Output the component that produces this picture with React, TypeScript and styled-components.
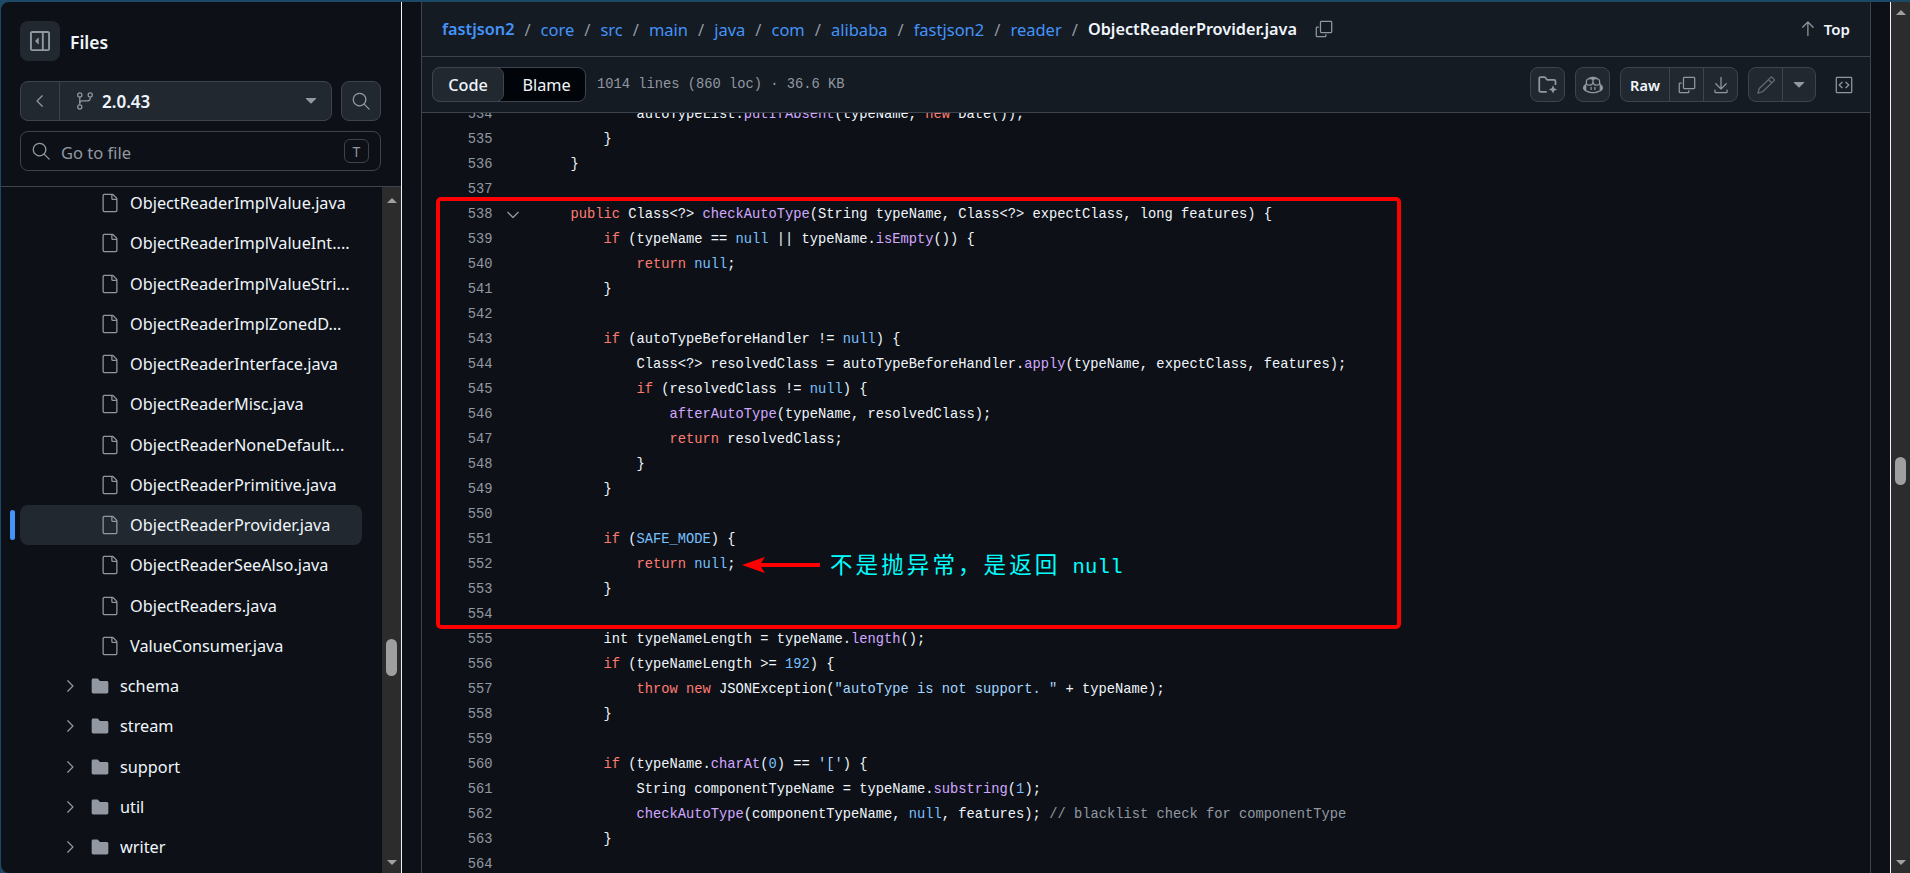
import React from 'react';
import styled, { createGlobalStyle } from 'styled-components';
import {
    GoArrowUp,
    GoChevronDown,
    GoChevronLeft,
    GoChevronRight,
    GoCodeSquare,
    GoCopilot,
    GoCopy,
    GoDownload,
    GoFile,
    GoFileDirectoryFill,
    GoGitBranch,
    GoPencil,
    GoSearch,
    GoTriangleDown,
} from 'react-icons/go';

const UI_FONT = `"Noto Sans", "Open Sans", sans-serif`;
const MONO_FONT = `"Liberation Mono", monospace`;

const GlobalStyle = createGlobalStyle`
  html, body {
    margin: 0;
    height: 100%;
    overflow: hidden;
    background: #1c4966;
  }
  * {
    box-sizing: border-box;
  }
`;

const Page = styled.div`
  display: flex;
  height: 873px;
  padding: 2px 0 0 1px;
  font-family: ${UI_FONT};
  color: #f0f6fc;
`;

const Sidebar = styled.aside`
  display: flex;
  flex-direction: column;
  flex: 0 0 401px;
  background: #0d1117;
  border-right: 1px solid #f4f4f4;
  border-radius: 8px 0 0 8px;
  overflow: hidden;
`;

const SidebarTop = styled.div`
  flex: 0 0 185px;
  padding: 19px 20px 0 19px;
  border-bottom: 1px solid #3d444d;
`;

const TitleRow = styled.div`
  display: flex;
  align-items: center;
  gap: 10px;
  margin-bottom: 20px;
`;

const Title = styled.span`
  padding-top: 2px;
  font-size: 17.5px;
  font-weight: 600;
`;

const IconButton = styled.div<{ $size?: number; $plain?: boolean }>`
  display: flex;
  align-items: center;
  justify-content: center;
  flex: 0 0 ${p => p.$size ?? 40}px;
  height: ${p => p.$size ?? 40}px;
  color: #9198a1;
  background: ${p => (p.$plain ? 'transparent' : '#212830')};
  border: ${p => (p.$plain ? '0' : '1px solid #3d444d')};
  border-radius: 8px;
`;

const BareToggle = styled(IconButton)`
  border: 0;
`;

const BranchRow = styled.div`
  display: flex;
  gap: 9px;
  margin-bottom: 10px;
`;

const BranchGroup = styled.div`
  display: flex;
  align-items: center;
  flex: 1;
  height: 40px;
  background: #212830;
  border: 1px solid #3d444d;
  border-radius: 8px;
  color: #9198a1;
`;

const BackSegment = styled.div`
  display: flex;
  align-items: center;
  justify-content: center;
  flex: 0 0 39px;
  height: 100%;
  border-right: 1px solid #3d444d;
`;

const BranchName = styled.span`
  margin-left: 7px;
  font-size: 17px;
  font-weight: 600;
  color: #f0f6fc;
`;

const BranchIcon = styled.span`
  display: flex;
  margin-left: 15px;
`;

const Caret = styled.span`
  display: flex;
  margin-left: auto;
  margin-right: 10px;
`;

const FileSearch = styled.div`
  display: flex;
  align-items: center;
  height: 40px;
  padding: 0 11px 0 10px;
  border: 1px solid #3d444d;
  border-radius: 8px;
  color: #9198a1;
  font-size: 16.5px;
`;

const Placeholder = styled.span`
  margin-left: 10px;
  padding-top: 2px;
`;

const KeyHint = styled.span`
  display: flex;
  align-items: center;
  justify-content: center;
  width: 25px;
  height: 24px;
  margin-left: auto;
  border: 1px solid #3d444d;
  border-radius: 6px;
  font-size: 14px;
`;

const TreePane = styled.div`
  display: flex;
  flex: 1;
  min-height: 0;
`;

const Tree = styled.ul`
  flex: 1;
  margin: -4px 0 0;
  padding: 0;
  list-style: none;
  overflow: hidden;
`;

const TreeRow = styled.li<{ $folder?: boolean; $active?: boolean }>`
  position: relative;
  display: flex;
  align-items: center;
  gap: 10px;
  height: 40.25px;
  margin: 0 20px 0 19px;
  padding-left: ${p => (p.$folder ? 40 : 80)}px;
  font-size: 16.25px;
  color: #f0f6fc;
  background: ${p => (p.$active ? '#212830' : 'transparent')};
  border-radius: 8px;
  svg {
    flex: none;
    color: #9198a1;
  }
`;

const ActiveMark = styled.span`
  position: absolute;
  left: -10px;
  top: 5px;
  width: 5px;
  height: 30px;
  border-radius: 3px;
  background: #4493f8;
`;

const ScrollTrack = styled.div`
  display: flex;
  flex-direction: column;
  align-items: center;
  flex: 0 0 19px;
  background: #2c2c2c;
`;

const ScrollUp = styled.span<{ $top: number }>`
  width: 0;
  height: 0;
  margin-top: ${p => p.$top}px;
  border-left: 5px solid transparent;
  border-right: 5px solid transparent;
  border-bottom: 5px solid #a0a0a0;
`;

const ScrollDown = styled.span`
  width: 0;
  height: 0;
  margin-top: auto;
  margin-bottom: 8px;
  border-left: 5px solid transparent;
  border-right: 5px solid transparent;
  border-top: 5px solid #a0a0a0;
`;

const ScrollThumb = styled.span<{ $gap: number; $height: number }>`
  width: 11px;
  height: ${p => p.$height}px;
  margin-top: ${p => p.$gap}px;
  border-radius: 6px;
  background: #9f9f9f;
`;

const Main = styled.main`
  display: flex;
  flex: 1;
  min-width: 0;
  background: #0d1117;
  border-right: 1px solid #f4f4f4;
  padding: 0 19px;
`;

const Blob = styled.section`
  display: flex;
  flex-direction: column;
  flex: 1;
  min-width: 0;
  border-left: 1px solid #3d444d;
  border-right: 1px solid #3d444d;
`;

const PathBar = styled.header`
  display: flex;
  align-items: center;
  flex: 0 0 55px;
  padding: 0 20px;
  background: #151b23;
  border-bottom: 1px solid #3d444d;
  font-size: 16.5px;
`;

const Crumb = styled.a<{ $root?: boolean }>`
  color: #4493f8;
  font-size: ${p => (p.$root ? '16.25px' : 'inherit')};
  font-weight: ${p => (p.$root ? 600 : 400)};
`;

const Slash = styled.span`
  margin: 0 10px;
  color: #9198a1;
`;

const CurrentFile = styled.strong`
  font-size: 16.25px;
  font-weight: 600;
`;

const CopyPath = styled.span`
  display: flex;
  margin-left: 17px;
  color: #9198a1;
`;

const TopLink = styled.span`
  display: flex;
  align-items: center;
  gap: 6px;
  margin-left: auto;
  font-size: 15px;
  font-weight: 600;
  svg {
    color: #9198a1;
  }
`;

const Toolbar = styled.div`
  display: flex;
  align-items: center;
  flex: 0 0 56px;
  padding: 0 16px 0 10px;
  background: #151b23;
  border-bottom: 1px solid #3d444d;
`;

const Segmented = styled.div`
  display: flex;
  height: 35px;
  background: #010409;
  border: 1px solid #3d444d;
  border-radius: 8px;
`;

const Segment = styled.span<{ $active?: boolean }>`
  display: flex;
  align-items: center;
  justify-content: center;
  width: ${p => (p.$active ? 72 : 81)}px;
  margin: ${p => (p.$active ? '-1px 0 -1px -1px' : '0')};
  padding-left: ${p => (p.$active ? 0 : 4)}px;
  font-size: 16.25px;
  font-weight: ${p => (p.$active ? 500 : 400)};
  background: ${p => (p.$active ? '#212830' : 'transparent')};
  border: ${p => (p.$active ? '1px solid #3d444d' : '0')};
  border-radius: 8px;
`;

const FileInfo = styled.span`
  margin-left: 11px;
  font-family: ${MONO_FONT};
  font-size: 13.75px;
  color: #9198a1;
`;

const ToolActions = styled.div`
  display: flex;
  align-items: center;
  gap: 10px;
  margin-left: auto;
`;

const ToolGroup = styled.div<{ $muted?: boolean }>`
  display: flex;
  height: 35px;
  margin-right: ${p => (p.$muted ? 8 : 0)}px;
  background: #212830;
  border: 1px solid #3d444d;
  border-radius: 8px;
  color: #9198a1;
`;

const ToolCell = styled.span<{ $width: number; $dim?: boolean }>`
  display: flex;
  align-items: center;
  justify-content: center;
  width: ${p => p.$width}px;
  font-size: 14.5px;
  font-weight: 600;
  color: ${p => (p.$dim ? '#656c76' : 'inherit')};
  & + & {
    border-left: 1px solid #3d444d;
  }
`;

const RawLabel = styled(ToolCell)`
  color: #f0f6fc;
`;

const CodePane = styled.div`
  position: relative;
  flex: 1;
  min-height: 0;
  overflow: hidden;
`;

const CodeList = styled.div`
  margin-top: -11px;
  font-family: ${MONO_FONT};
  font-size: 13.75px;
  color: #f0f6fc;
`;

const CodeRow = styled.div`
  display: flex;
  align-items: center;
  height: 25px;
  white-space: pre;
`;

const LineNumber = styled.span`
  flex: 0 0 70.5px;
  text-align: right;
  color: #9198a1;
`;

const Gutter = styled.span`
  display: flex;
  flex: 0 0 45px;
  padding-left: 10px;
  color: #9198a1;
`;

type TokenKind = 't' | 'k' | 'f' | 'c' | 's' | 'm';
type CodeToken = [TokenKind, string];

const tokenColors: Record<TokenKind, string> = {
    t: '#f0f6fc',
    k: '#ff7b72',
    f: '#d2a8ff',
    c: '#79c0ff',
    s: '#a5d6ff',
    m: '#9198a1',
};

const Token = styled.span<{ $kind: TokenKind }>`
  color: ${p => tokenColors[p.$kind]};
`;

const Highlight = styled.div`
  position: absolute;
  left: 14px;
  top: 84px;
  width: 965px;
  height: 432px;
  border: 4px solid #ff0000;
  border-radius: 5px;
`;

const Annotation = styled.div`
  position: absolute;
  left: 302px;
  top: 344px;
  display: flex;
  align-items: center;
  gap: 10px;
  color: #00ffff;
  white-space: nowrap;
`;

const NoteArrow = styled.svg`
  margin-bottom: 2px;
`;

const NoteText = styled.span`
  font-family: "Noto Sans CJK SC", sans-serif;
  font-size: 22.5px;
  letter-spacing: 3.1px;
  line-height: 36px;
`;

const NoteCode = styled.span`
  margin-left: 12px;
  font-family: ${MONO_FONT};
  font-size: 20.5px;
  letter-spacing: 0.3px;
`;

const codeLines: CodeToken[][] = [
    [['t', '            autoTypeList.'], ['f', 'putIfAbsent'], ['t', '(typeName, '], ['k', 'new'], ['t', ' Date());']],
    [['t', '        }']],
    [['t', '    }']],
    [],
    [['k', '    public'], ['t', ' Class<?> '], ['f', 'checkAutoType'], ['t', '(String typeName, Class<?> expectClass, long features) {']],
    [['k', '        if'], ['t', ' (typeName == '], ['c', 'null'], ['t', ' || typeName.'], ['f', 'isEmpty'], ['t', '()) {']],
    [['k', '            return'], ['t', ' '], ['c', 'null'], ['t', ';']],
    [['t', '        }']],
    [],
    [['k', '        if'], ['t', ' (autoTypeBeforeHandler != '], ['c', 'null'], ['t', ') {']],
    [['t', '            Class<?> resolvedClass = autoTypeBeforeHandler.'], ['f', 'apply'], ['t', '(typeName, expectClass, features);']],
    [['k', '            if'], ['t', ' (resolvedClass != '], ['c', 'null'], ['t', ') {']],
    [['f', '                afterAutoType'], ['t', '(typeName, resolvedClass);']],
    [['k', '                return'], ['t', ' resolvedClass;']],
    [['t', '            }']],
    [['t', '        }']],
    [],
    [['k', '        if'], ['t', ' ('], ['c', 'SAFE_MODE'], ['t', ') {']],
    [['k', '            return'], ['t', ' '], ['c', 'null'], ['t', ';']],
    [['t', '        }']],
    [],
    [['t', '        int typeNameLength = typeName.'], ['f', 'length'], ['t', '();']],
    [['k', '        if'], ['t', ' (typeNameLength >= '], ['c', '192'], ['t', ') {']],
    [['k', '            throw new'], ['t', ' JSONException('], ['s', '"autoType is not support. "'], ['t', ' + typeName);']],
    [['t', '        }']],
    [],
    [['k', '        if'], ['t', ' (typeName.'], ['f', 'charAt'], ['t', '('], ['c', '0'], ['t', ') == '], ['s', "'['"], ['t', ') {']],
    [['t', '            String componentTypeName = typeName.'], ['f', 'substring'], ['t', '('], ['c', '1'], ['t', ');']],
    [['f', '            checkAutoType'], ['t', '(componentTypeName, '], ['c', 'null'], ['t', ', features); '], ['m', '// blacklist check for componentType']],
    [['t', '        }']],
    [],
];

const FIRST_LINE = 534;

const files = [
    'ObjectReaderImplValue.java',
    'ObjectReaderImplValueInt....',
    'ObjectReaderImplValueStri...',
    'ObjectReaderImplZonedD...',
    'ObjectReaderInterface.java',
    'ObjectReaderMisc.java',
    'ObjectReaderNoneDefault...',
    'ObjectReaderPrimitive.java',
    'ObjectReaderProvider.java',
    'ObjectReaderSeeAlso.java',
    'ObjectReaders.java',
    'ValueConsumer.java',
];

const folders = ['schema', 'stream', 'support', 'util', 'writer'];

const crumbs = ['core', 'src', 'main', 'java', 'com', 'alibaba', 'fastjson2', 'reader'];

const PanelToggle: React.FC = () => (
    <svg width="20" height="20" viewBox="0 0 16 16" fill="currentColor">
        <path d="M4.177 7.823l2.396-2.396A.25.25 0 0 1 7 5.604v4.792a.25.25 0 0 1-.427.177L4.177 8.177a.25.25 0 0 1 0-.354Z" />
        <path d="M0 1.75C0 .784.784 0 1.75 0h12.5C15.216 0 16 .784 16 1.75v12.5A1.75 1.75 0 0 1 14.25 16H1.75A1.75 1.75 0 0 1 0 14.25Zm1.75-.25a.25.25 0 0 0-.25.25v12.5c0 .138.112.25.25.25H9.5v-13Zm12.5 13a.25.25 0 0 0 .25-.25V1.75a.25.25 0 0 0-.25-.25H11v13Z" />
    </svg>
);

const FolderSparkle: React.FC = () => (
    <svg width="20" height="20" viewBox="0 0 16 16" fill="none">
        <path
            d="M7 13.5H2.2A1.2 1.2 0 0 1 1 12.3V2.7a1 1 0 0 1 1-1h3.1c.4 0 .7.2.9.5l.9 1.2c.2.3.5.4.8.4h5.1a1.2 1.2 0 0 1 1.2 1.2V8"
            stroke="currentColor"
            strokeWidth="1.4"
        />
        <path d="M12 8.2l1 2.3 2.3 1-2.3 1-1 2.3-1-2.3-2.3-1 2.3-1z" fill="currentColor" />
    </svg>
);

const ArrowMark: React.FC = () => (
    <NoteArrow width="78" height="16" viewBox="0 0 78 16">
        <path d="M0 8L23 0L19 6H78V10H19L23 16Z" fill="#ff0000" />
    </NoteArrow>
);

const App: React.FC = () => {
    return (
        <Page>
            <GlobalStyle />
            <Sidebar>
                <SidebarTop>
                    <TitleRow>
                        <BareToggle><PanelToggle /></BareToggle>
                        <Title>Files</Title>
                    </TitleRow>
                    <BranchRow>
                        <BranchGroup>
                            <BackSegment><GoChevronLeft size={20} /></BackSegment>
                            <BranchIcon><GoGitBranch size={20} /></BranchIcon>
                            <BranchName>2.0.43</BranchName>
                            <Caret><GoTriangleDown size={20} /></Caret>
                        </BranchGroup>
                        <IconButton><GoSearch size={20} /></IconButton>
                    </BranchRow>
                    <FileSearch>
                        <GoSearch size={20} />
                        <Placeholder>Go to file</Placeholder>
                        <KeyHint>T</KeyHint>
                    </FileSearch>
                </SidebarTop>
                <TreePane>
                    <Tree>
                        {files.map(name => (
                            <TreeRow key={name} $active={name === 'ObjectReaderProvider.java'}>
                                {name === 'ObjectReaderProvider.java' && <ActiveMark />}
                                <GoFile size={20} />
                                {name}
                            </TreeRow>
                        ))}
                        {folders.map(name => (
                            <TreeRow key={name} $folder>
                                <GoChevronRight size={20} />
                                <GoFileDirectoryFill size={20} />
                                {name}
                            </TreeRow>
                        ))}
                    </Tree>
                    <ScrollTrack>
                        <ScrollUp $top={11} />
                        <ScrollThumb $gap={436} $height={37} />
                        <ScrollDown />
                    </ScrollTrack>
                </TreePane>
            </Sidebar>
            <Main>
                <Blob>
                    <PathBar>
                        <Crumb $root>fastjson2</Crumb>
                        {crumbs.map((crumb, i) => (
                            <React.Fragment key={i}>
                                <Slash>/</Slash>
                                <Crumb>{crumb}</Crumb>
                            </React.Fragment>
                        ))}
                        <Slash>/</Slash>
                        <CurrentFile>ObjectReaderProvider.java</CurrentFile>
                        <CopyPath><GoCopy size={20} /></CopyPath>
                        <TopLink><GoArrowUp size={20} />Top</TopLink>
                    </PathBar>
                    <Toolbar>
                        <Segmented>
                            <Segment $active>Code</Segment>
                            <Segment>Blame</Segment>
                        </Segmented>
                        <FileInfo>1014 lines (860 loc) · 36.6 KB</FileInfo>
                        <ToolActions>
                            <IconButton $size={35}><FolderSparkle /></IconButton>
                            <IconButton $size={35}><GoCopilot size={20} /></IconButton>
                            <ToolGroup>
                                <RawLabel $width={48}>Raw</RawLabel>
                                <ToolCell $width={34}><GoCopy size={20} /></ToolCell>
                                <ToolCell $width={34}><GoDownload size={20} /></ToolCell>
                            </ToolGroup>
                            <ToolGroup $muted>
                                <ToolCell $width={33} $dim><GoPencil size={20} /></ToolCell>
                                <ToolCell $width={33}><GoTriangleDown size={20} /></ToolCell>
                            </ToolGroup>
                            <IconButton $size={20} $plain><GoCodeSquare size={20} /></IconButton>
                        </ToolActions>
                    </Toolbar>
                    <CodePane>
                        <CodeList>
                            {codeLines.map((tokens, i) => (
                                <CodeRow key={i}>
                                    <LineNumber>{FIRST_LINE + i}</LineNumber>
                                    <Gutter>{FIRST_LINE + i === 538 && <GoChevronDown size={20} />}</Gutter>
                                    {tokens.map(([kind, text], j) => (
                                        <Token key={j} $kind={kind}>{text}</Token>
                                    ))}
                                </CodeRow>
                            ))}
                        </CodeList>
                        <Highlight>
                            <Annotation>
                                <ArrowMark />
                                <NoteText>不是抛异常，是返回<NoteCode>null</NoteCode></NoteText>
                            </Annotation>
                        </Highlight>
                    </CodePane>
                </Blob>
            </Main>
            <ScrollTrack>
                <ScrollUp $top={8} />
                <ScrollThumb $gap={442} $height={28} />
                <ScrollDown />
            </ScrollTrack>
        </Page>
    );
};

export default App;
